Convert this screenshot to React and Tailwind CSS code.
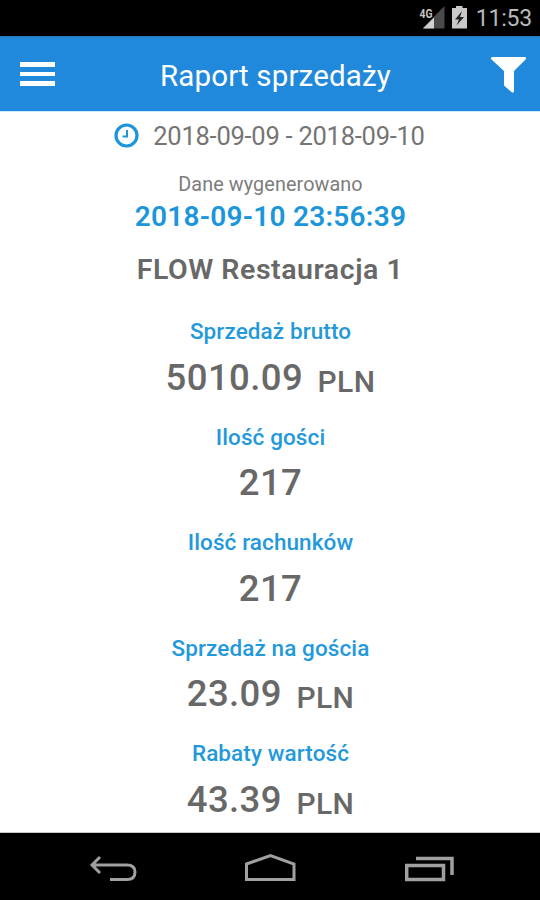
const stats = [
  { label: "Sprzedaż brutto", value: "5010.09", unit: "PLN" },
  { label: "Ilość gości", value: "217" },
  { label: "Ilość rachunków", value: "217" },
  { label: "Sprzedaż na gościa", value: "23.09", unit: "PLN" },
  { label: "Rabaty wartość", value: "43.39", unit: "PLN" },
];

function StatusBar() {
  return (
    <div className="h-9 shrink-0 bg-black flex items-start justify-end pr-[8px] text-[#b9b9b9]">
      <svg width="28" height="30" viewBox="0 0 28 30" className="mr-[5px]">
        <path d="M26.500 6V28.500H4.500Z" fill="#4a4a4a" />
        <path d="M16 17.500V28.500H5Z" fill="#d0d0d0" />
        <text x="1.500" y="17.500" fill="#c4c4c4" fontSize="13" fontWeight="700" textLength="13" lengthAdjust="spacingAndGlyphs">4G</text>
      </svg>
      <svg width="17" height="30" viewBox="0 0 17 30" className="mr-[8px]">
        <path d="M5 6H11.500V8H16V28.500H1V8H5Z" fill="#c8c8c8" />
        <path d="M11 11L4 19.500H8L5.500 25.500L13 17H9Z" fill="#222" />
      </svg>
      <span className="text-[23px] leading-[38px] tracking-[-0.200px]">11:53</span>
    </div>
  );
}

function Header() {
  return (
    <header className="h-[76px] shrink-0 bg-[#2189dc] border-t border-t-[#2b78b5] border-b border-b-[#c5ecff] flex items-center pl-[20px] pr-[13px] text-white">
      <button className="w-[35px] flex flex-col gap-[5px]">
        <span className="h-[4.500px] w-full bg-white" />
        <span className="h-[4.500px] w-full bg-white" />
        <span className="h-[4.500px] w-full bg-white" />
      </button>
      <h1 className="ml-[105px] pt-[3px] text-[29.500px] leading-[36px] tracking-[0.150px]">Raport sprzedaży</h1>
      <svg width="37" height="38" viewBox="0 0 37 38" className="ml-auto mt-[2px]">
        <path d="M2 1H35Q37 2 35.500 3.500L24 15V35.500Q23.500 37 22 36.500L14 29.500V15L1.500 3.500Q0 2 2 1Z" fill="#fff" />
      </svg>
    </header>
  );
}

function Stat({ label, value, unit }) {
  return (
    <div className="h-[105.600px] shrink-0 flex flex-col items-center gap-[11.700px]">
      <div className="text-[22.500px] leading-[30px] font-medium tracking-[0.100px] text-[#2399db]">{label}</div>
      <div className="flex gap-[14.500px] text-[#686868]">
        <span className="text-[36.500px] leading-[40px] font-medium tracking-[0.400px]">{value}</span>
        {unit && <span className="text-[30px] leading-[40px] pt-[4px] font-medium tracking-[0.400px]">{unit}</span>}
      </div>
    </div>
  );
}

function NavBar() {
  return (
    <nav className="h-[68px] shrink-0 bg-black border-t border-t-[#c8c8c8] flex items-start pt-[20px] pl-[89px]">
      <svg width="48" height="30" viewBox="0 0 48 30" fill="none" stroke="#a0a0a0" strokeWidth="3">
        <path d="M11 4L3 12L11 20M3 12H38Q46 12 46 19Q46 26.500 38 26.500H21" />
      </svg>
      <svg width="52" height="30" viewBox="0 0 52 30" className="ml-[107px]" fill="none" stroke="#a0a0a0" strokeWidth="3">
        <path d="M2.500 11L26.500 2.500L50 11V26.500H2.500Z" />
      </svg>
      <svg width="50" height="30" viewBox="0 0 50 30" className="ml-[109px]" fill="none" stroke="#a0a0a0" strokeWidth="3.500">
        <path d="M1.700 12.500H38.500V26.500H1.700ZM11 5.500H47V22" />
      </svg>
    </nav>
  );
}

export default function App() {
  return (
    <div className="w-[540px] h-[900px] flex flex-col overflow-hidden bg-white font-['Roboto',sans-serif]">
      <StatusBar />
      <Header />
      <main className="h-[720px] shrink-0 overflow-hidden flex flex-col items-center pt-[9px] pl-[1px] text-[#686868]">
        <div className="flex items-center gap-[14px] h-[30px] -ml-[2px]">
          <svg width="25" height="25" viewBox="0 0 25 25" fill="none" stroke="#1b96da" className="-mt-[2px]">
            <circle cx="12.500" cy="12.500" r="10.500" strokeWidth="3.200" />
            <path d="M13 7V13.500H8.500" strokeWidth="2" />
          </svg>
          <span className="text-[25.500px] leading-[30px] font-normal text-[#757575] tracking-[-0.250px]">2018-09-09 - 2018-09-10</span>
        </div>
        <div className="mt-[21.500px] text-[19.800px] leading-[24px] font-normal text-[#7c7c7c] tracking-[0.100px]">Dane wygenerowano</div>
        <div className="mt-[4.500px] text-[28px] leading-[32px] font-semibold text-[#1b96da] tracking-[0.250px]">2018-09-10 23:56:39</div>
        <div className="mt-[21px] mb-[30px] -ml-[1px] text-[28.500px] leading-[32px] font-semibold tracking-[0.550px]">FLOW Restauracja 1</div>
        {stats.map((s) => <Stat key={s.label} {...s} />)}
      </main>
      <NavBar />
    </div>
  );
}
